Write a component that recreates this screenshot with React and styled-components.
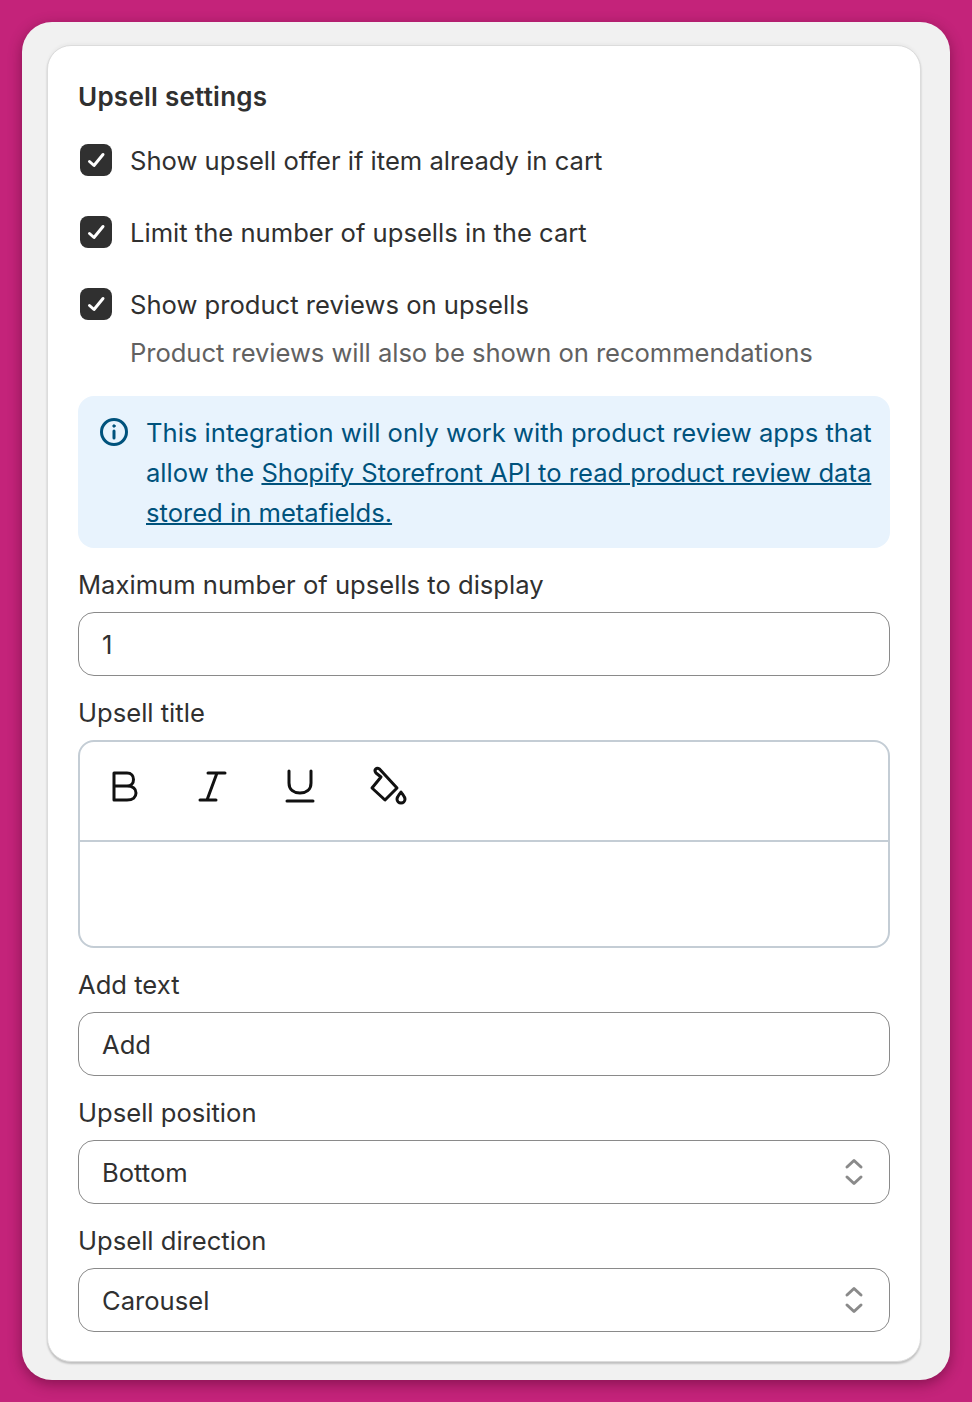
import React from 'react';
import styled, { createGlobalStyle } from 'styled-components';

const GlobalStyle = createGlobalStyle`
    html, body {
        margin: 0;
        padding: 0;
        background-color: #c4237a;
    }
    * {
        box-sizing: border-box;
    }
`;

const Page = styled.div`
    width: 972px;
    height: 1402px;
    padding: 22px;
    background-color: #c4237a;
    font-family: Inter, "Liberation Sans", sans-serif;
    font-size: 25.6px;
    color: #303030;
`;

const Frame = styled.div`
    width: 928px;
    height: 1358px;
    padding: 23px 29px 0 25px;
    background-color: #f1f1f1;
    border-radius: 30px;
    box-shadow: 0 4px 14px rgba(60, 0, 30, 0.45);
`;

const Card = styled.div`
    height: 1317px;
    padding: 31px 30px 30px 30px;
    background-color: #fff;
    border-radius: 24px;
    border: 1px solid #dcdcdc;
    box-shadow: 0 2px 2px rgba(0, 0, 0, 0.2), 0 -2px 3px rgba(0, 0, 0, 0.03);
`;

const Title = styled.h2`
    margin: 0 0 24px;
    font-size: 26px;
    line-height: 40px;
    font-weight: 600;
    letter-spacing: 0.25px;
`;

const CheckList = styled.div`
    display: flex;
    flex-direction: column;
    gap: 32px;
`;

const CheckRow = styled.label`
    display: flex;
    align-items: center;
    gap: 18px;
    height: 40px;
    padding-left: 2px;
    line-height: 40px;
`;

const CheckBox = styled.span`
    display: flex;
    align-items: center;
    justify-content: center;
    width: 32px;
    height: 32px;
    margin-bottom: 2px;
    background-color: #303030;
    border-radius: 8px;
`;

const Help = styled.p`
    margin: 8px 0 23px 52px;
    line-height: 40px;
    letter-spacing: -0.05px;
    color: #616161;
`;

const Banner = styled.div`
    display: flex;
    gap: 16px;
    height: 152px;
    padding: 17px 16px 15px 20px;
    background-color: #e8f3fd;
    border-radius: 16px;
    color: #00527c;
    line-height: 40px;
`;

const BannerIcon = styled.svg`
    flex: none;
    width: 32px;
    height: 32px;
    margin-top: 3px;
`;

const BannerLink = styled.a`
    color: inherit;
    text-decoration: underline;
    text-decoration-thickness: 2px;
`;

const Field = styled.div`
    margin-top: 16px;
`;

const Label = styled.div`
    margin-bottom: 6px;
    line-height: 42px;
`;

const Control = styled.div`
    display: flex;
    align-items: center;
    justify-content: space-between;
    height: 64px;
    padding: 0 25px 0 23px;
    border: 1.5px solid #8a8a8a;
    border-radius: 16px;
`;

const Editor = styled.div`
    height: 208px;
    border: 2px solid #c4cdd5;
    border-radius: 16px;
`;

const Toolbar = styled.div`
    display: flex;
    align-items: center;
    gap: 40px;
    height: 100px;
    padding: 0 22px 10px;
    border-bottom: 2px solid #c4cdd5;
`;

const ToolIcon = styled.svg`
    width: 48px;
    height: 48px;
    fill: none;
    stroke: #111;
    stroke-width: 3;
    stroke-linecap: round;
    stroke-linejoin: round;
`;

const Check = () => (
    <svg width="20" height="20" viewBox="0 0 20 20" fill="none">
        <path d="M3.5 11.5 L8 15.5 L17 4.500" stroke="#fff" strokeWidth="3" strokeLinecap="round" strokeLinejoin="round" />
    </svg>
);

const Chevrons = () => (
    <svg width="20" height="28" viewBox="0 0 20 28" fill="none">
        <path d="M3 9 L10 2.5 L17 9 M3 19 L10 25.5 L17 19" stroke="#8a8a8a" strokeWidth="3" strokeLinecap="round" strokeLinejoin="round" />
    </svg>
);

const checks = [
    'Show upsell offer if item already in cart',
    'Limit the number of upsells in the cart',
    'Show product reviews on upsells',
];

const App = () => {
    return (
        <Page>
            <GlobalStyle />
            <Frame>
                <Card>
                    <Title>Upsell settings</Title>
                    <CheckList>
                        {checks.map((text) => (
                            <CheckRow key={text}>
                                <CheckBox><Check /></CheckBox>
                                {text}
                            </CheckRow>
                        ))}
                    </CheckList>
                    <Help>Product reviews will also be shown on recommendations</Help>
                    <Banner>
                        <BannerIcon viewBox="0 0 32 32" fill="none" stroke="#00527c" strokeWidth="3" strokeLinecap="round">
                            <circle cx="16" cy="16" r="12.5" />
                            <path d="M16 15 V22" />
                            <circle cx="16" cy="10" r="1.2" fill="#00527c" strokeWidth="1" />
                        </BannerIcon>
                        <div>
                            This integration will only work with product review apps that allow the{' '}
                            <BannerLink href="#">Shopify Storefront API to read product review data stored in metafields.</BannerLink>
                        </div>
                    </Banner>
                    <Field>
                        <Label>Maximum number of upsells to display</Label>
                        <Control>1</Control>
                    </Field>
                    <Field>
                        <Label>Upsell title</Label>
                        <Editor>
                            <Toolbar>
                                <ToolIcon viewBox="0 0 48 48">
                                    <path d="M12 11 H25 C29.500 11 31.500 14 31.500 17.500 C31.500 21 29.500 24 25 24 H12 M25 24 C31 24 34 27 34 31 C34 35 31 38 25 38 H12 V11" />
                                </ToolIcon>
                                <ToolIcon viewBox="0 0 48 48">
                                    <path d="M18 11 H35 M27 11 L17 38 M10 38 H26" />
                                </ToolIcon>
                                <ToolIcon viewBox="0 0 48 48">
                                    <path d="M11 9 V21 C11 28 16 31 22 31 C28 31 33 28 33 21 V9 M9 39 H35" />
                                </ToolIcon>
                                <ToolIcon viewBox="0 0 48 48">
                                    <path d="M15 15 L10 11 C7.500 8 10.500 5 13.500 7 L31 26 L19 38 L6 26 L15 15" />
                                    <path d="M35 30 C33 33 31 35 31 37 A4 4 0 0 0 39 37 C39 35 37 33 35 30 Z" />
                                </ToolIcon>
                            </Toolbar>
                        </Editor>
                    </Field>
                    <Field>
                        <Label>Add text</Label>
                        <Control>Add</Control>
                    </Field>
                    <Field>
                        <Label>Upsell position</Label>
                        <Control>Bottom<Chevrons /></Control>
                    </Field>
                    <Field>
                        <Label>Upsell direction</Label>
                        <Control>Carousel<Chevrons /></Control>
                    </Field>
                </Card>
            </Frame>
        </Page>
    );
};

export default App;
